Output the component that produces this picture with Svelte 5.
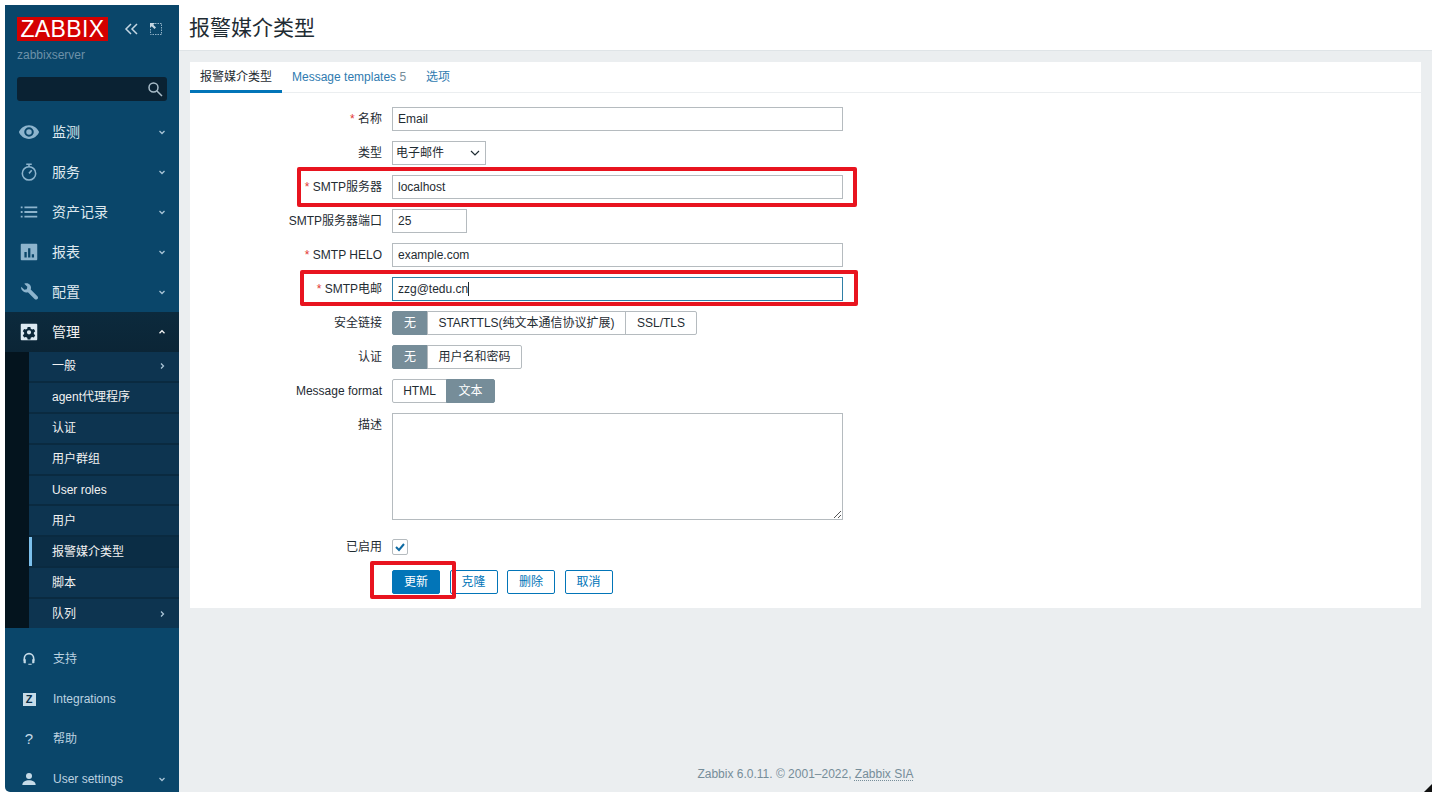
<script>
  const topNav = [
    { id: 'eye', label: '监测' },
    { id: 'watch', label: '服务' },
    { id: 'list', label: '资产记录' },
    { id: 'report', label: '报表' },
    { id: 'wrench', label: '配置' }
  ];
  const subNav = [
    { label: '一般', arrow: true },
    { label: 'agent代理程序' },
    { label: '认证' },
    { label: '用户群组' },
    { label: 'User roles' },
    { label: '用户' },
    { label: '报警媒介类型', current: true },
    { label: '脚本' },
    { label: '队列', arrow: true }
  ];
</script>

{#snippet chev(dir)}
  <svg class="chev" viewBox="0 0 8 8" width="8" height="8">
    {#if dir === 'down'}<path d="M1.5 3 4 5.5 6.5 3" />
    {:else if dir === 'up'}<path d="M1.5 5.2 4 2.7 6.5 5.2" />
    {:else}<path d="M3 1.5 5.5 4 3 6.5" />{/if}
  </svg>
{/snippet}

{#snippet icon(id)}
  <svg class="ico" viewBox="0 0 24 24" width="24" height="24">
    {#if id === 'eye'}
      <path fill-rule="evenodd" d="M12 4.5C6.8 4.5 2.6 7.8 1 12c1.6 4.2 5.800 7.500 11 7.500s9.400-3.300 11-7.500c-1.600-4.200-5.800-7.500-11-7.500Zm0 12.700a5.200 5.200 0 1 1 0-10.400 5.200 5.200 0 0 1 0 10.400Zm0-2.200a3 3 0 1 0 0-6 3 3 0 0 0 0 6Z" />
    {:else if id === 'watch'}
      <g fill="none" stroke="currentColor" stroke-width="1.700"><circle cx="12" cy="13.500" r="7.300" /><path d="M9 3.500h6M12 3.500v2.700M12 13.500l3-3.500" /></g>
    {:else if id === 'list'}
      <path d="M3 6h2v2H3zM7 6h14v2H7zM3 11h2v2H3zM7 11h14v2H7zM3 16h2v2H3zM7 16h14v2H7z" />
    {:else if id === 'report'}
      <path fill-rule="evenodd" d="M4 3h16a1 1 0 0 1 1 1v16a1 1 0 0 1-1 1H4a1 1 0 0 1-1-1V4a1 1 0 0 1 1-1Zm3 9v6h2.500v-6Zm4-4v10h2.500V8Zm4 6.500V18h2.500v-3.500Z" />
    {:else if id === 'wrench'}
      <path d="M3.500 6.300 7 9.500l2.600-.6.600-2.600L6.800 3c2.600-.9 5-.3 6.300 1.300 1.200 1.500 1.400 3.300.8 4.900l7.300 7.300c.9.900.9 2.200 0 3.100-.9.900-2.200.9-3.100 0l-7.300-7.300c-1.700.6-3.500.3-4.900-.8C4.200 10.300 3 8.400 3.500 6.300Z" />
    {:else if id === 'gear'}
      <path fill-rule="evenodd" d="M4 3h16a1 1 0 0 1 1 1v16a1 1 0 0 1-1 1H4a1 1 0 0 1-1-1V4a1 1 0 0 1 1-1Zm6.500 3.500-.4 2-1.500.8-1.900-.7-1.500 2.600 1.500 1.300v1.700l-1.500 1.300 1.500 2.600 1.900-.7 1.500.8.400 2h3l.4-2 1.500-.8 1.900.7 1.500-2.600-1.500-1.300v-1.700l1.500-1.300-1.500-2.600-1.900.7-1.500-.8-.4-2ZM12 10a2.300 2.300 0 1 1 0 4.600 2.300 2.300 0 0 1 0-4.600Z" />
    {:else if id === 'headset'}
      <g fill="none" stroke="currentColor" stroke-width="2.400"><path d="M5 14.500V11a7 7 0 0 1 14 0v3.500" /></g>
      <path d="M3.800 12.500h3.400v6H5a1.200 1.200 0 0 1-1.200-1.200ZM16.800 12.500h3.400v4.800A1.200 1.200 0 0 1 19 18.500h-2.200ZM11 19h5v1.800h-5z" />
    {:else if id === 'user'}
      <circle cx="12" cy="7.500" r="4.500" />
      <path d="M2 21c0-4.500 4.500-7 10-7s10 2.500 10 7Z" />
    {/if}
  </svg>
{/snippet}

<div class="shell">
  <aside class="side">
    <div class="brand">
      <div class="brandrow">
        <div class="logo">ZABBIX</div>
        <svg class="collapse" viewBox="0 0 14 14" width="14" height="14"><path d="M7 2 2 7l5 5M13 2 8 7l5 5" /></svg>
        <svg class="kiosk" viewBox="0 0 14 14" width="14" height="14"><path class="dash" d="M6 1.500h6.500V12.500H1.500V6" /><path class="arrow" d="M1 1h5L4.300 2.700 7 5.500 5.500 7 2.700 4.300 1 6Z" /></svg>
      </div>
      <div class="server">zabbixserver</div>
      <div class="search">
        <svg viewBox="0 0 16 16" width="16" height="16"><circle cx="6.500" cy="6.500" r="4.500" /><path d="m10 10 5 5" /></svg>
      </div>
    </div>

    <nav class="nav">
      {#each topNav as item}
        <div class="item">
          {@render icon(item.id)}
          <span>{item.label}</span>
          {@render chev('down')}
        </div>
      {/each}
      <div class="item open">
        {@render icon('gear')}
        <span>管理</span>
        {@render chev('up')}
      </div>
      <div class="subwrap">
        <ul class="sub">
          {#each subNav as s}
            <li class:current={s.current}>
              <span>{s.label}</span>
              {#if s.arrow}{@render chev('right')}{/if}
            </li>
          {/each}
        </ul>
      </div>
    </nav>

    <div class="bottom">
      <div class="bitem">{@render icon('headset')}<span>支持</span></div>
      <div class="bitem"><b class="zbox">Z</b><span>Integrations</span></div>
      <div class="bitem"><b class="qmark">?</b><span>帮助</span></div>
      <div class="bitem">{@render icon('user')}<span>User settings</span>{@render chev('down')}</div>
    </div>
  </aside>

  <main class="main">
    <header class="head"><h1>报警媒介类型</h1></header>
    <section class="panel">
      <div class="tabs">
        <a class="tab active">报警媒介类型</a>
        <a class="tab">Message templates <i>5</i></a>
        <a class="tab">选项</a>
      </div>
      <form class="form">
        <div class="row"><label><em>*</em> 名称</label><div class="input wide">Email</div></div>
        <div class="row"><label>类型</label>
          <div class="select">电子邮件
            <svg viewBox="0 0 10 10" width="10" height="10"><path d="M1 3l4 4 4-4" /></svg>
          </div>
        </div>
        <div class="row"><label><em>*</em> SMTP服务器</label><div class="input wide">localhost</div></div>
        <div class="row"><label>SMTP服务器端口</label><div class="input port">25</div></div>
        <div class="row"><label><em>*</em> SMTP HELO</label><div class="input wide">example.com</div></div>
        <div class="row"><label><em>*</em> SMTP电邮</label><div class="input wide focus">zzg@tedu.cn<span class="caret"></span></div></div>
        <div class="row"><label>安全链接</label>
          <div class="seg"><span class="on w36">无</span><span class="w198">STARTTLS(纯文本通信协议扩展)</span><span class="w71">SSL/TLS</span></div>
        </div>
        <div class="row"><label>认证</label>
          <div class="seg"><span class="on w36">无</span><span class="w94">用户名和密码</span></div>
        </div>
        <div class="row"><label>Message format</label>
          <div class="seg"><span class="w55">HTML</span><span class="on w48">文本</span></div>
        </div>
        <div class="row"><label class="top">描述</label><div class="area"><svg viewBox="0 0 10 10" width="10" height="10"><path d="M9 2 2 9M9 6 6 9" /></svg></div></div>
        <div class="row check"><label>已启用</label>
          <div class="box"><svg viewBox="0 0 14 14" width="14" height="14"><path d="m3 7 3 3 5-6" /></svg></div>
        </div>
        <div class="row btns">
          <label></label>
          <div class="btn primary">更新</div>
          <div class="btn">克隆</div>
          <div class="btn">删除</div>
          <div class="btn">取消</div>
        </div>
      </form>
    </section>
    <footer class="foot">Zabbix 6.0.11. © 2001–2022, <u>Zabbix SIA</u></footer>
  </main>

  <div class="mark m1"></div>
  <div class="mark m2"></div>
  <div class="mark m3"></div>
  <svg class="corner" viewBox="0 0 8 8" width="8" height="8"><path d="M8 0v8H0Z" /></svg>
</div>

<style>
  :global(body) {
    margin: 0;
    background: #fff;
  }
  .shell {
    position: relative;
    display: flex;
    width: 1427px;
    height: 787px;
    margin: 5px 0 0 5px;
    font: 12px/14px "Liberation Sans", "Noto Sans CJK SC", sans-serif;
    color: #1f2c33;
  }
  .side {
    flex: none;
    width: 174px;
    height: 787px;
    overflow: hidden;
    background: #0a466a;
    color: #f2f2f2;
    display: flex;
    flex-direction: column;
    border-bottom-left-radius: 5px;
  }
  .brand {
    height: 107px;
    flex: none;
    padding: 12px 12px 0;
    box-sizing: border-box;
  }
  .brandrow {
    display: flex;
    align-items: center;
    height: 24px;
  }
  .logo {
    width: 91px;
    height: 24px;
    background: #d40000;
    color: #fff;
    font-size: 23px;
    line-height: 25px;
    text-align: center;
    letter-spacing: 0.4px;
  }
  .collapse {
    margin-left: 16px;
    fill: none;
    stroke: #c4d6e2;
    stroke-width: 1.500;
  }
  .kiosk {
    margin-left: 11px;
    fill: none;
  }
  .kiosk .dash {
    stroke: #8fb0c6;
    stroke-width: 1;
    stroke-dasharray: 1.500 1;
  }
  .kiosk .arrow {
    fill: #c4d6e2;
  }
  .server {
    margin-top: 7px;
    color: #6d91a8;
    height: 14px;
  }
  .search {
    margin-top: 15px;
    height: 24px;
    width: 150px;
    box-sizing: border-box;
    background: #0a2233;
    border-radius: 3px;
    display: flex;
    align-items: center;
    justify-content: flex-end;
    padding-right: 4px;
  }
  .search svg {
    fill: none;
    stroke: #a9bdca;
    stroke-width: 1.500;
  }
  .item {
    display: flex;
    align-items: center;
    height: 40px;
    padding-left: 13px;
    font-size: 14px;
    color: #dfe9ef;
  }
  .item .ico {
    flex: none;
    width: 22px;
    height: 22px;
    fill: #8db4cd;
    color: #8db4cd;
  }
  .item span {
    margin-left: 12px;
    flex: 1;
  }
  .chev {
    flex: none;
    margin-right: 13px;
    fill: none;
    stroke: #a9c4d6;
    stroke-width: 1.300;
  }
  .item.open {
    background: linear-gradient(#0c2a3d, #0b2536);
    color: #f2f2f2;
  }
  .item.open .ico {
    fill: #dce9f1;
    color: #dce9f1;
  }
  .item.open .chev {
    stroke: #f2f2f2;
  }
  .subwrap {
    background: #04141e;
    padding-left: 24px;
    height: 276px;
  }
  .sub {
    list-style: none;
    margin: 0;
    padding: 0;
    height: 276px;
    display: flex;
    flex-direction: column;
  }
  .sub li {
    flex: 1;
    display: flex;
    align-items: center;
    padding-left: 23px;
    background: #0d3450;
    border-bottom: 2px solid #0a2a40;
    color: #f2f2f2;
  }
  .sub li span {
    flex: 1;
  }
  .sub li:last-child {
    border-bottom: 0;
  }
  .sub li.current {
    box-shadow: inset 3px 0 0 #7cc0ec;
    background: #0b2d45;
  }
  .bottom {
    margin-top: 11px;
  }
  .bitem {
    display: flex;
    align-items: center;
    height: 40px;
    color: #bcd2e0;
    padding-left: 16px;
  }
  .bitem .ico {
    flex: none;
    width: 16px;
    height: 16px;
    fill: #c6dbe8;
    color: #c6dbe8;
  }
  .bitem span {
    margin-left: 16px;
    flex: 1;
  }
  .zbox {
    flex: none;
    width: 13px;
    height: 13px;
    margin: 0 1.500px;
    background: #c6dbe8;
    color: #0a2f48;
    font-size: 11px;
    line-height: 13px;
    text-align: center;
  }
  .qmark {
    flex: none;
    width: 16px;
    text-align: center;
    font-weight: 400;
    font-size: 15px;
    color: #c6dbe8;
  }
  .main {
    flex: 1;
    min-width: 0;
    display: flex;
    flex-direction: column;
    background: #ebeef0;
  }
  .head {
    flex: none;
    height: 45px;
    background: #fff;
    border-bottom: 1px solid #dfe4e7;
    padding-left: 10px;
  }
  h1 {
    margin: 0;
    font-size: 21px;
    line-height: 46px;
    font-weight: 400;
    color: #1f2c33;
  }
  .panel {
    margin: 11px 11px 0;
    background: #fff;
    height: 546px;
    flex: none;
  }
  .tabs {
    display: flex;
    height: 30px;
    border-bottom: 1px solid #ebeef0;
  }
  .tab {
    padding: 8px 10px 0;
    color: #2f7bb0;
    box-sizing: border-box;
    height: 31px;
  }
  .tab i {
    font-style: normal;
    color: #768d99;
  }
  .tab.active {
    color: #1f2c33;
    border-bottom: 3px solid #0275b8;
  }
  .form {
    padding-top: 14px;
  }
  .row {
    display: flex;
    align-items: center;
    margin-bottom: 10px;
    min-height: 24px;
  }
  label {
    flex: none;
    width: 192px;
    margin-right: 10px;
    text-align: right;
    color: #1f2c33;
    white-space: nowrap;
  }
  label.top {
    align-self: flex-start;
    padding-top: 5px;
  }
  em {
    font-style: normal;
    color: #e33734;
  }
  .input {
    box-sizing: border-box;
    height: 24px;
    border: 1px solid #b5bbbf;
    padding: 0 5px;
    line-height: 22px;
    color: #1f2c33;
    background: #fff;
    white-space: nowrap;
  }
  .wide {
    width: 451px;
  }
  .port {
    width: 75px;
  }
  .focus {
    border-color: #2f7fa6;
  }
  .caret {
    display: inline-block;
    width: 1px;
    height: 14px;
    background: #1f2c33;
    vertical-align: -3px;
  }
  .select {
    box-sizing: border-box;
    width: 94px;
    height: 24px;
    border: 1px solid #b5bbbf;
    padding: 0 5px 0 3px;
    line-height: 22px;
    display: flex;
    justify-content: space-between;
    align-items: center;
  }
  .select svg {
    fill: none;
    stroke: #1f2c33;
    stroke-width: 1.200;
  }
  .seg {
    display: flex;
    height: 24px;
  }
  .seg span {
    box-sizing: border-box;
    border: 1px solid #b5bbbf;
    margin-left: -1px;
    text-align: center;
    line-height: 22px;
    white-space: nowrap;
  }
  .seg span:first-child {
    margin-left: 0;
    border-radius: 2px 0 0 2px;
  }
  .seg span:last-child {
    border-radius: 0 2px 2px 0;
  }
  .seg .on {
    background: #768d99;
    border-color: #768d99;
    color: #fff;
  }
  .w36 { width: 36px; }
  .w48 { width: 49px; }
  .w55 { width: 55px; }
  .w71 { width: 72px; }
  .w94 { width: 95px; }
  .w198 { width: 199px; }
  .area {
    box-sizing: border-box;
    position: relative;
    width: 451px;
    height: 107px;
    border: 1px solid #b5bbbf;
  }
  .area svg {
    position: absolute;
    right: 0;
    bottom: 0;
    fill: none;
    stroke: #555;
    stroke-width: 1;
  }
  .check {
    margin-top: 19px;
    margin-bottom: 15px;
    min-height: 16px;
  }
  .box {
    box-sizing: border-box;
    width: 16px;
    height: 16px;
    border: 1px solid #b5bbbf;
    border-radius: 2px;
  }
  .box svg {
    display: block;
    fill: none;
    stroke: #0d6aa3;
    stroke-width: 2;
  }
  .btns {
    gap: 9.500px;
  }
  .btns label {
    margin-right: 0.500px;
  }
  .btn {
    box-sizing: border-box;
    width: 48px;
    height: 24px;
    border: 1px solid #0275b8;
    border-radius: 2px;
    color: #0275b8;
    text-align: center;
    line-height: 22px;
  }
  .btn.primary {
    background: #0275b8;
    color: #fff;
  }
  .foot {
    margin-top: auto;
    height: 25px;
    text-align: center;
    color: #768d99;
  }
  .foot u {
    text-decoration: underline dotted;
    text-underline-offset: 2px;
  }
  .mark {
    position: absolute;
    box-sizing: border-box;
    border: 4px solid #e8141f;
    border-radius: 2px;
    pointer-events: none;
  }
  .m1 { left: 292px; top: 162px; width: 560px; height: 40px; }
  .m2 { left: 295px; top: 265px; width: 558px; height: 36px; }
  .m3 { left: 365px; top: 556px; width: 86px; height: 38px; }
  .corner {
    position: absolute;
    right: 0;
    bottom: 0;
    fill: #111;
  }
</style>
